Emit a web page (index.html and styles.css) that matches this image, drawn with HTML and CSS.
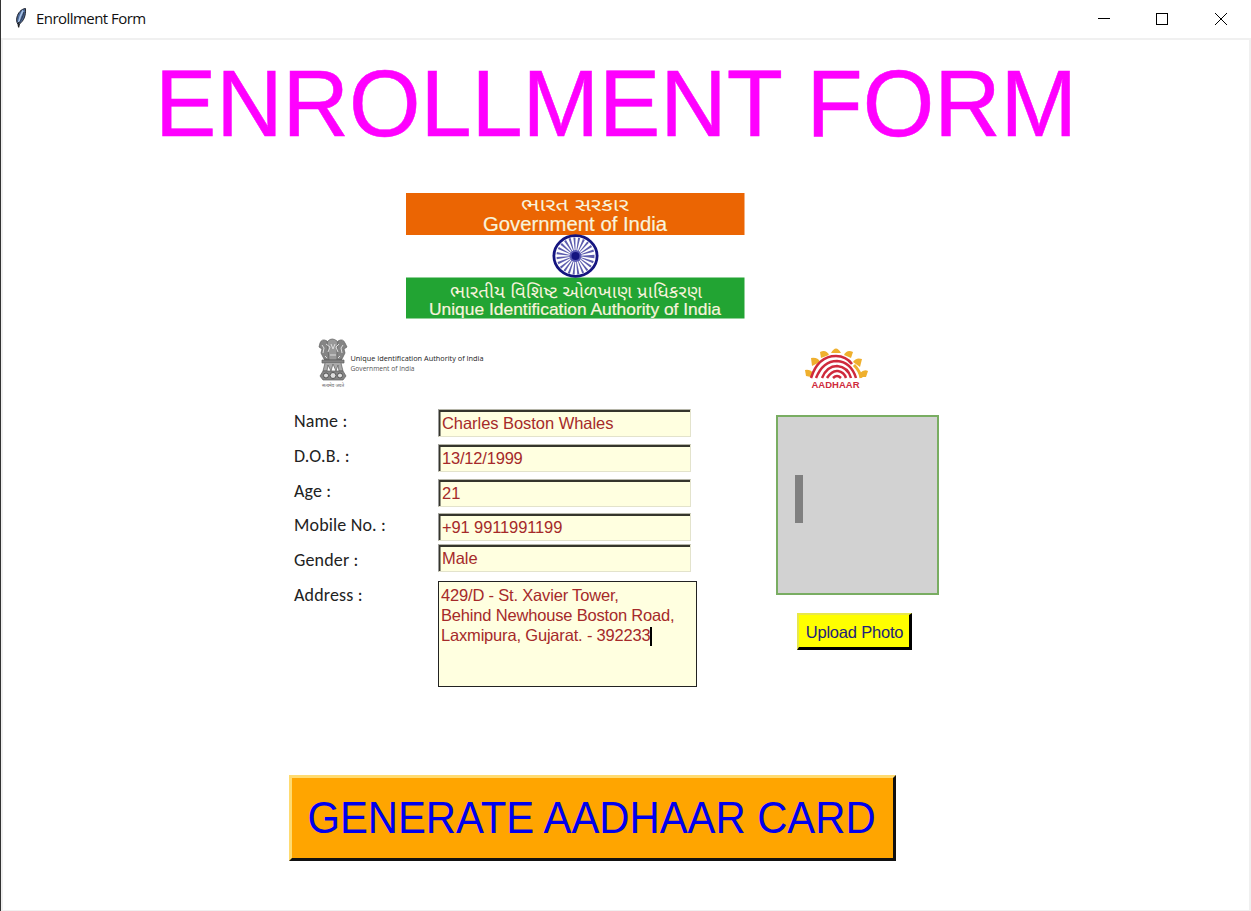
FILE: index.html
```html
<!DOCTYPE html>
<html lang="en">
<head>
<meta charset="utf-8">
<title>Enrollment Form</title>
<link rel="stylesheet" href="styles.css">
</head>
<body>
<div class="window">
  <header class="titlebar">
    <svg class="feather" width="14" height="22" viewBox="0 0 14 22">
      <path d="M11.500 1.500C7 2 4 6 3 10C2.300 13 2.500 15 4 17.500L4.500 20L5.500 17C9.500 14 12 9 11.500 1.500Z" fill="#4a6796" stroke="#20242e" stroke-width="1"/>
      <path d="M9 3.500C7 7 5.500 11 4.500 16" fill="none" stroke="#a9c4e8" stroke-width="1.600"/>
      <path d="M10 5C9 10 7 13 5 16" fill="none" stroke="#2c3950" stroke-width="1"/>
      <path d="M4.700 15V20.500" stroke="#222" stroke-width="1.200"/>
    </svg>
    <span class="caption">Enrollment Form</span>
    <svg class="controls" width="132" height="20" viewBox="0 0 132 20" fill="none" stroke="#000" stroke-width="1">
      <path d="M0 9.500H12"/>
      <rect x="58.500" y="4.500" width="11" height="11"/>
      <path d="M117 4L129 16M129 4L117 16"/>
    </svg>
  </header>
  <main class="client">
    <h1 class="title"><span class="title-text">ENROLLMENT FORM</span></h1>
    <svg class="banner" width="339" height="126" viewBox="0 0 339 126">
      <rect width="338.500" height="42" fill="#eb6503"/>
      <rect y="84.500" width="338.500" height="41" fill="#22a433"/>
      <g class="banner-text" fill="#f8f3dc">
        <text x="115" y="18" font-size="18" textLength="108" lengthAdjust="spacingAndGlyphs">ભારત સરકાર</text>
        <text class="english" x="77" y="37.500" font-size="19.500" textLength="184" lengthAdjust="spacingAndGlyphs">Government of India</text>
        <text x="44" y="105" font-size="17.500" textLength="252" lengthAdjust="spacingAndGlyphs">ભારતીય વિશિષ્ટ ઓળખાણ પ્રાધિકરણ</text>
        <text class="english" x="23" y="121.500" font-size="17" textLength="292" lengthAdjust="spacingAndGlyphs">Unique Identification Authority of India</text>
      </g>
      <ellipse cx="169.500" cy="63" rx="21.600" ry="20.300" fill="#fff" stroke="#151580" stroke-width="2.800"/>
      <ellipse cx="169.500" cy="63" rx="10.500" ry="10" fill="none" stroke="#34349a" stroke-width="17" stroke-dasharray="1.200 1.550" opacity=".8"/>
      <circle cx="169.500" cy="63" r="6" fill="#5a5ab4"/>
      <circle cx="169.500" cy="63" r="4" fill="#151580"/>
    </svg>
    <div class="logos">
      <svg width="180" height="54" viewBox="0 0 180 54">
        <g fill="#858585" stroke="#606060" stroke-width=".7">
          <path d="M10 4Q14 0 19 4L22 9L20 19L24 23H6L9 19L6 9Z" fill="#999"/>
          <path d="M9 4Q4 1 2 6L1 10L4 12L3 16L6 22L11 23L10 12Z"/>
          <path d="M20 4Q25 1 27 6L29 10L26 12L27 16L24 22L19 23L19 12Z"/>
          <path d="M4 23H26V26H4Z"/>
          <path d="M7 26L5 34H9L10 28L13 34L15 27L18 34L20 28L21 34H25L23 26" fill="#aaa"/>
          <path d="M5 34H25L28 39L25 43H5L2 39Z"/>
        </g>
        <g fill="#ddd" stroke="#555" stroke-width="1"><circle cx="8" cy="38.500" r="2.500"/><circle cx="15" cy="38.500" r="3"/><circle cx="22" cy="38.500" r="2.500"/></g>
        <path d="M8 7L12 10L10 15M21 7L18 10L20 15M13 7L15 12L17 7M12 18H18M4 8L6 11L5 16M25 8L23 11L24 16M7 19L9 21M22 19L20 21" fill="none" stroke="#ddd" stroke-width="1"/>
        <text class="motto" x="4" y="50" textLength="22" lengthAdjust="spacingAndGlyphs">सत्यमेव जयते</text>
        <text class="uid-name" x="32.500" y="24" textLength="133" lengthAdjust="spacingAndGlyphs">Unique Identification Authority of India</text>
        <text class="uid-gov" x="32.500" y="33.500" textLength="64" lengthAdjust="spacingAndGlyphs">Government of India</text>
      </svg>
      <svg width="64" height="44" viewBox="0 0 64 44">
        <g fill="#efb02e">
          <path d="M1 29L0 23Q5 22 8 26L6 30Z"/><path d="M7 19L6 11Q13 10 15 15Z"/><path d="M16 11L15 5Q21 2 24 8Z"/>
          <path d="M26 6Q31 -3 36 6Z"/><path d="M39 8Q42 2 48 5L46 11Z"/><path d="M48 15Q51 10 57 12L55 20Z"/><path d="M55 26Q59 22 63 24L61 30H57Z"/>
        </g>
        <g fill="none" stroke="#cf2a3c" stroke-width="2.500">
          <path d="M6 31Q13 9 31 9Q41 9 47 17"/><path d="M11 31Q18 14 32 14Q46 15 51 31"/>
          <path d="M17 31Q22 19 32 19Q43 20 46 31"/><path d="M22 31Q27 23 33 24Q39 25 41 31"/><path d="M28 31Q32 27 36 31"/>
        </g>
        <path d="M49 18Q55 24 56 31" fill="none" stroke="#efb02e" stroke-width="3"/>
        <text class="aadhaar" x="6.500" y="40.500" textLength="48" lengthAdjust="spacingAndGlyphs">AADHAAR</text>
      </svg>
    </div>
    <div class="form">
      <div class="labels">
        <label>Name :</label><label>D.O.B. :</label><label>Age :</label><label>Mobile No. :</label><label>Gender :</label><label>Address :</label>
      </div>
      <div class="fields">
        <div class="entry">Charles Boston Whales</div>
        <div class="entry dob">13/12/1999</div>
        <div class="entry">21</div>
        <div class="entry tight">+91 9911991199</div>
        <div class="entry last">Male</div>
        <div class="address">429/D - St. Xavier Tower,<br>Behind Newhouse Boston Road,<br>Laxmipura, Gujarat. - 392233<span class="caret"></span></div>
      </div>
      <div class="photo-col">
        <div class="photo"><div class="photo-bar"></div></div>
        <button class="upload">Upload Photo</button>
      </div>
    </div>
    <button class="generate"><span class="generate-text">GENERATE AADHAAR CARD</span></button>
  </main>
</div>
</body>
</html>
```
FILE: styles.css
```css
* { box-sizing: border-box; }
body { margin: 0; background: #fff; font-family: "Liberation Sans", Arial, sans-serif; overflow: hidden; }
.window { width: 1251px; height: 911px; display: flex; flex-direction: column; border-left: 1px solid #333; }
.titlebar { height: 38px; display: flex; align-items: center; padding: 0 21px 0 13px; }
.feather { margin-top: -2px; }
.caption { font: 15px/20px "Open Sans", "Noto Sans", sans-serif; letter-spacing: -0.55px; margin: -2px 0 0 8px; color: #111; }
.controls { margin-left: auto; }
.client { flex: 1; border: 2px solid #f0f0f0; border-bottom-width: 1px; display: flex; flex-direction: column; align-items: flex-start; }
.title { margin: 10px 0 0 152px; font-size: 92px; font-weight: 400; line-height: 106px; letter-spacing: -0.1px; color: #f0f; white-space: nowrap; -webkit-text-stroke: 0.5px #f0f; }
.title-text { display: inline-block; transform: scaleY(1.03); }
.banner { margin: 37px 0 0 403px; }
.banner-text { font-family: "Liberation Sans", "Noto Sans Gujarati", "Noto Sans", sans-serif; }
.english { stroke: #f8f3dc; stroke-width: 0.2px; }
.logos { display: flex; gap: 307px; align-items: flex-start; margin: 18px 0 0 315px; }
.logos svg:last-child { margin-top: 10px; }
.motto { font: 5px "Noto Sans", sans-serif; fill: #666; }
.uid-name { font: 7px "Open Sans", sans-serif; fill: #222; }
.uid-gov { font: 6.5px "Open Sans", sans-serif; fill: #555; }
.aadhaar { font: bold 9.5px "Liberation Sans", sans-serif; fill: #cf2a3c; }
.form { display: flex; margin: 18px 0 0 291px; height: 279px; }
.labels { width: 144px; display: flex; flex-direction: column; font: 18px/34.800px Carlito, Lato, sans-serif; color: #222; letter-spacing: 0.15px; margin-top: -5px; }
.fields { width: 259px; }
.entry { width: 253px; height: 28px; margin-bottom: 7px; border: 1px solid; border-color: #b5b5a8 #e3e3cc #e3e3cc #999; box-shadow: inset 1.500px 2px #35352c; background: #ffffe0; color: #a52a2a; font-size: 16.500px; line-height: 26px; padding-left: 3px; letter-spacing: -0.05px; }
.entry.dob { letter-spacing: -0.2px; }
.entry:nth-child(3) { margin-bottom: 6px; }
.entry.tight { margin-bottom: 3px; letter-spacing: -0.12px; }
.entry.last { margin-bottom: 9px; }
.address { height: 106px; border: 1px solid #222; background: #ffffe0; color: #a52a2a; font-size: 16.500px; letter-spacing: -0.18px; line-height: 20px; padding: 3px 0 0 2px; white-space: nowrap; }
.caret { display: inline-block; width: 2px; height: 19px; background: #000; vertical-align: -5px; margin: -1px 0 0 -1px; }
.photo-col { margin: 6px 0 0 79px; width: 163px; }
.photo { height: 180px; border: 2px solid #79ad62; background: #d2d2d2; padding: 58px 0 0 17px; }
.photo-bar { width: 8px; height: 48px; background: #808080; }
.upload { display: block; margin: 18px 0 0 21px; width: 115px; height: 37px; padding: 2px 0 0 1px; background: #ff0; border: 2px solid; border-color: #e8e84a #000 #000 #e8e84a; border-width: 2px 3px 3px 2px; color: #22227a; font: 16.500px "Liberation Sans", sans-serif; letter-spacing: -0.2px; }
.generate { margin: 87px 0 0 286px; width: 607px; height: 86px; padding: 0; background: #ffa500; border: 3px solid; border-color: #ffdb70 #111 #111 #ffdb70; color: #00e; font: 41.800px "Liberation Sans", sans-serif; white-space: nowrap; }
.generate-text { display: inline-block; margin-left: -2px; transform: scaleY(1.04); }
```
